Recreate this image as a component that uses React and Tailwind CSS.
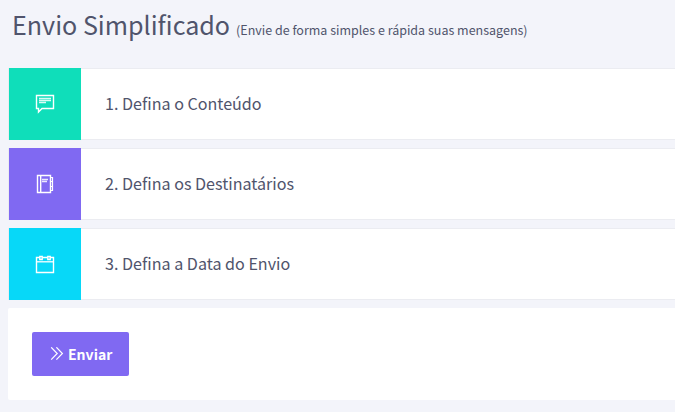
import React from 'react';

const MessageIcon = () => (
  <svg width="20" height="20" viewBox="0 0 20 20" fill="none" stroke="currentColor">
    <path d="M1.5 1.5h17v13H7l-3.5 3.5v-3.5h-2z" strokeWidth="1.4" />
    <path d="M4 4.5h12M4 6.5h12M4 8.5h7" strokeWidth="1.5" opacity="0.85" />
  </svg>
);

const NotebookIcon = () => (
  <svg width="20" height="20" viewBox="0 0 20 20" fill="none" stroke="currentColor">
    <path d="M2.5 1.5h13v17h-13z" strokeWidth="1.4" />
    <path d="M5.7 1.5v17" strokeWidth="1.4" />
    <path d="M7 5.5h6M7 7.5h5" strokeWidth="1.4" opacity="0.85" />
    <path d="M15.5 3.5h2v13h-2M15.5 7.5h2M15.5 12.5h2" strokeWidth="1.2" />
  </svg>
);

const CalendarIcon = () => (
  <svg width="20" height="20" viewBox="0 0 20 20" fill="none" stroke="currentColor">
    <path d="M4.5 3.5h-3v15h17v-15h-3M7.5 3.5h5" strokeWidth="1.4" />
    <path d="M1.5 7.8h17" strokeWidth="1.3" />
    <path d="M4.8 2.5h2.4v3h-2.4zM12.8 2.5h2.4v3h-2.4z" strokeWidth="1.4" />
  </svg>
);

const ForwardIcon = () => (
  <svg width="14" height="14" viewBox="0 0 14 14" fill="none" stroke="currentColor" strokeWidth="1.2">
    <path d="M1.2 .3l6 6.2-6 6.2M6.4 .3l6 6.2-6 6.2" />
  </svg>
);

const steps = [
  { id: 1, title: '1. Defina o Conteúdo', color: 'bg-[#0fdeba]', icon: <MessageIcon /> },
  { id: 2, title: '2. Defina os Destinatários', color: 'bg-[#8069f2]', icon: <NotebookIcon /> },
  { id: 3, title: '3. Defina a Data do Envio', color: 'bg-[#07d8f8]', icon: <CalendarIcon /> },
];

const App = () => {
  return (
    <div className="h-[412px] overflow-hidden bg-[#f3f4fa] pl-2 font-['Noto_Sans_CJK_JP','Noto_Sans_CJK_SC',sans-serif] text-[#50546c]">
      <h1 className="flex h-[68px] items-baseline pl-1 pt-1 text-[25.1px] font-normal leading-[40px] whitespace-nowrap">
        Envio Simplificado
        <small className="ml-[6px] text-[12.5px]">(Envie de forma simples e rápida suas mensagens)</small>
      </h1>
      <div className="flex flex-col gap-2">
        {steps.map((step) => (
          <div key={step.id} className="flex h-[72px] items-center border-y border-l border-[#ebecf1] bg-white">
            <div className={`-my-px flex h-[72px] w-[72px] items-center justify-center text-white ${step.color}`}>
              {step.icon}
            </div>
            <h3 className="pb-0.5 pl-6 text-[16.1px] font-normal leading-6">{step.title}</h3>
          </div>
        ))}
      </div>
      <div className="mt-2 h-[92px] rounded-l-[2px] bg-white p-6">
        <button className="flex h-11 w-[97px] items-center rounded-[2px] bg-[#8069f2] pl-[18px] text-white">
          <ForwardIcon />
          <span className="ml-1 text-[14px] font-bold">Enviar</span>
        </button>
      </div>
    </div>
  );
};

export default App;
